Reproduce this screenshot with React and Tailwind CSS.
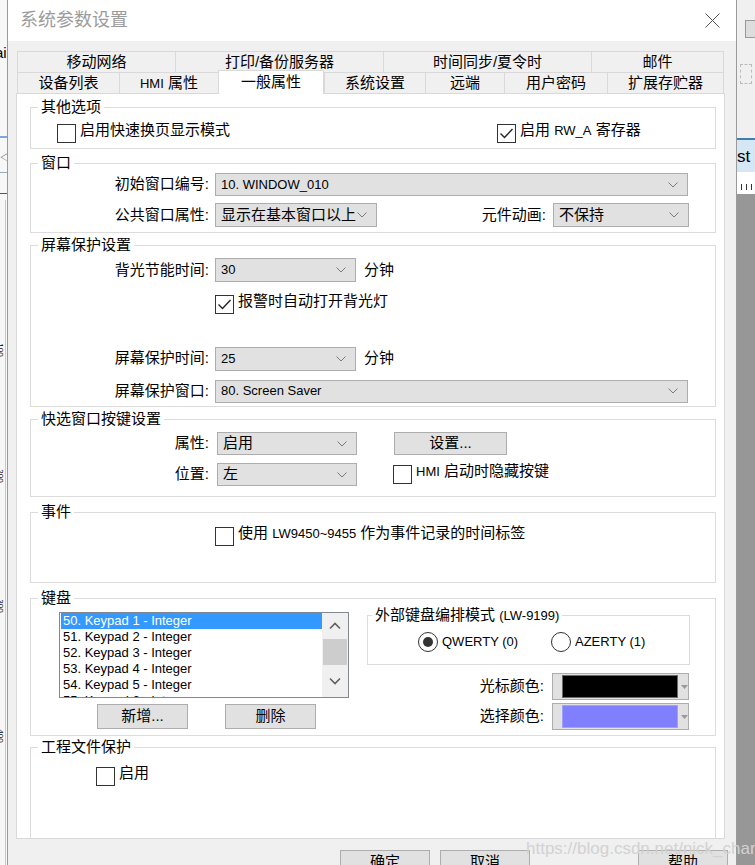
import React from 'react'

const Chevron = () => (
  <svg width="10" height="6" viewBox="0 0 10 6" className="shrink-0">
    <path d="M0.5 0.5 L5 5 L9.5 0.5" fill="none" stroke="#7a7a7a" strokeWidth="1" />
  </svg>
)

const Select = ({ value, className, latin }) => (
  <div className={`flex items-center h-[23px] bg-[#e1e1e1] border border-[#adadad] pl-[5px] pr-[9px] ${className}`}>
    <span className={`flex-1 overflow-hidden whitespace-nowrap ${latin ? 'text-[13px]' : 'text-[15px]'}`}>{value}</span>
    <Chevron />
  </div>
)

const Check = ({ checked, children, className = '' }) => (
  <div className={`flex items-center ${className}`}>
    <span className="w-[19px] h-[19px] shrink-0 border border-[#333] bg-white flex items-center justify-center">
      {checked && (
        <svg width="15" height="13" viewBox="0 0 15 13">
          <path d="M1.5 6.5 L5.5 10.5 L13.5 2" fill="none" stroke="#222" strokeWidth="1.4" />
        </svg>
      )}
    </span>
    <span className="relative -top-[3px] ml-[4px] text-[15px] whitespace-nowrap">{children}</span>
  </div>
)

const Radio = ({ checked, children }) => (
  <div className="flex items-center">
    <span className="w-[20px] h-[20px] rounded-full border border-[#333] bg-white flex items-center justify-center">
      {checked && <span className="w-[10px] h-[10px] rounded-full bg-[#333]" />}
    </span>
    <span className="ml-[4px] text-[13px]">{children}</span>
  </div>
)

const Group = ({ title, className, children }) => (
  <div className={`relative shrink-0 border border-[#dcdcdc] ${className}`}>
    <span className="absolute left-[7px] -top-[11px] bg-white px-[3px] text-[15px] leading-[20px] whitespace-nowrap">{title}</span>
    {children}
  </div>
)

const Label = ({ children, className = 'w-[178px]' }) => (
  <span className={`text-right text-[15px] whitespace-nowrap ${className}`}>{children}</span>
)

const Btn = ({ children, className }) => (
  <div className={`flex items-center justify-center bg-[#e1e1e1] border border-[#adadad] text-[15px] ${className}`}>
    <span>{children}</span>
  </div>
)

const ColorPick = ({ color, edge }) => (
  <div className="flex items-center w-[137px] h-[27px] bg-[#e1e1e1] border border-[#adadad] pl-[9px]">
    <span className={`w-[116px] h-[23px] border ${color} ${edge}`} />
    <svg width="7" height="4" viewBox="0 0 7 4" className="ml-[3px]">
      <path d="M0 0 L7 0 L3.5 4 Z" fill="#9a9a9a" />
    </svg>
  </div>
)

const tabsTop = [
  { label: '移动网络', w: 'w-[158px]' },
  { label: '打印/备份服务器', w: 'w-[208px]' },
  { label: '时间同步/夏令时', w: 'w-[208px]' },
  { label: '邮件', w: 'w-[133px]' },
]

const tabsBottom = [
  { label: '设备列表', w: 'w-[102px]' },
  { label: <span><span className="text-[13px]">HMI</span> 属性</span>, w: 'w-[99px]' },
  { label: '一般属性', w: 'w-[106px]', active: true },
  { label: '系统设置', w: 'w-[101px]' },
  { label: '远端', w: 'w-[79px]' },
  { label: '用户密码', w: 'w-[103px]' },
  { label: '扩展存贮器', w: 'w-[117px]' },
]

const keypads = [
  '50. Keypad 1 - Integer',
  '51. Keypad 2 - Integer',
  '52. Keypad 3 - Integer',
  '53. Keypad 4 - Integer',
  '54. Keypad 5 - Integer',
  '55. Keypad 6 - Integer',
]

export default function App() {
  return (
    <div className="relative flex w-[755px] h-[865px] overflow-hidden bg-white text-black font-['Liberation_Sans','Noto_Sans_CJK_SC',sans-serif]">
      {/* left strip: editor behind the dialog */}
      <div className="relative w-[7px] h-full shrink-0 bg-[#f7f7f7] overflow-hidden">
        <span className="absolute -left-[5px] top-[42px] text-[15px]">ai</span>
        <span className="absolute left-0 top-[136px] w-[7px] h-[2px] bg-[#7fa7d6]" />
        <span className="absolute left-0 top-[150px] text-[10px] text-[#444]">◁</span>
        <span className="absolute left-0 top-[172px] w-[7px] h-px bg-[#9ab]" />
        <span className="absolute left-0 top-[193px] w-[7px] h-px bg-[#555]" />
        <span className="absolute left-[5px] top-[200px] w-px h-[665px] bg-[#c8c8c8]" />
        <span className="absolute -left-[7px] top-[346px] rotate-90 text-[8px] leading-[8px]">100</span>
        <span className="absolute -left-[7px] top-[472px] rotate-90 text-[8px] leading-[8px]">200</span>
        <span className="absolute -left-[7px] top-[602px] rotate-90 text-[8px] leading-[8px]">300</span>
        <span className="absolute -left-[7px] top-[732px] rotate-90 text-[8px] leading-[8px]">400</span>
      </div>

      {/* dialog */}
      <div className="flex flex-col shrink-0 w-[730px] h-full border-x border-[#9a9a9a] bg-[#f0f0f0]">
        <div className="flex shrink-0 items-center justify-between h-[41px] bg-white pl-[12px] pr-[16px]">
          <span className="text-[18px] text-[#9b9b9b]">系统参数设置</span>
          <svg width="15" height="15" viewBox="0 0 15 15">
            <path d="M0.5 0.5 L14.5 14.5 M14.5 0.5 L0.5 14.5" stroke="#555" strokeWidth="1" />
          </svg>
        </div>

        <div className="flex shrink-0 flex-col pl-[8px] pt-[10px]">
          {/* tabs */}
          <div className="ml-[1px] w-[707px] shrink-0">
            <div className="flex h-[21px]">
              {tabsTop.map((t, i) => (
                <div
                  key={i}
                  className={`flex items-center justify-center border-t border-l border-[#d9d9d9] text-[15px] ${t.w} ${i === tabsTop.length - 1 ? 'border-r' : ''}`}
                >
                  {t.label}
                </div>
              ))}
            </div>
            <div className="flex items-end h-[21px]">
              {tabsBottom.map((t, i) =>
                t.active ? (
                  <div
                    key={i}
                    className={`relative z-10 -mb-px flex items-start justify-center h-[24px] bg-white border-x border-t border-[#d9d9d9] text-[15px] ${t.w}`}
                  >
                    {t.label}
                  </div>
                ) : (
                  <div
                    key={i}
                    className={`flex items-center justify-center h-[21px] border-t border-l border-[#d9d9d9] text-[15px] ${t.w} ${i === tabsBottom.length - 1 ? 'border-r' : ''}`}
                  >
                    {t.label}
                  </div>
                )
              )}
            </div>
          </div>

          {/* tab page */}
          <div className="flex shrink-0 flex-col w-[709px] h-[746px] border border-[#d9d9d9] bg-white pl-[13px] pr-[8px] pt-[13px]">
            <Group title="其他选项" className="h-[42px] pt-[14px] pl-[26px]">
              <div className="flex">
                <Check className="w-[440px]">启用快速换页显示模式</Check>
                <Check checked>
                  启用 <span className="text-[13px]">RW_A</span> 寄存器
                </Check>
              </div>
            </Group>

            <Group title="窗口" className="mt-[14px] h-[70px] pt-[9px]">
              <div className="flex items-center">
                <Label>初始窗口编号:</Label>
                <Select value="10. WINDOW_010" latin className="ml-[6px] w-[473px]" />
              </div>
              <div className="flex items-center mt-[7px]">
                <Label>公共窗口属性:</Label>
                <Select value="显示在基本窗口以上" className="ml-[6px] w-[162px] h-[24px]" />
                <span className="flex-1" />
                <Label className="">元件动画:</Label>
                <Select value="不保持" className="ml-[7px] mr-[26px] w-[136px] h-[24px]" />
              </div>
            </Group>

            <Group title="屏幕保护设置" className="mt-[12px] h-[162px] pt-[12px]">
              <div className="flex items-center">
                <Label>背光节能时间:</Label>
                <Select value="30" latin className="ml-[6px] w-[141px] h-[24px]" />
                <span className="ml-[8px] text-[15px]">分钟</span>
              </div>
              <Check checked className="mt-[11px] pl-[184px]">报警时自动打开背光灯</Check>
              <div className="flex items-center mt-[31px]">
                <Label>屏幕保护时间:</Label>
                <Select value="25" latin className="ml-[6px] w-[141px] h-[24px]" />
                <span className="ml-[8px] text-[15px]">分钟</span>
              </div>
              <div className="flex items-center mt-[9px]">
                <Label>屏幕保护窗口:</Label>
                <Select value="80. Screen Saver" latin className="ml-[6px] w-[473px]" />
              </div>
            </Group>

            <Group title="快选窗口按键设置" className="mt-[12px] h-[78px] pt-[12px]">
              <div className="flex items-center">
                <Label>属性:</Label>
                <Select value="启用" className="ml-[8px] w-[140px]" />
                <Btn className="ml-[37px] w-[113px] h-[23px]">设置...</Btn>
              </div>
              <div className="flex items-center mt-[8px]">
                <Label>位置:</Label>
                <Select value="左" className="ml-[8px] w-[140px]" />
                <Check className="ml-[36px]">
                  <span className="text-[13px]">HMI</span> 启动时隐藏按键
                </Check>
              </div>
            </Group>

            <Group title="事件" className="mt-[15px] h-[71px] pt-[12px] pl-[184px]">
              <Check>
                使用 <span className="text-[13px]">LW9450~9455</span> 作为事件记录的时间标签
              </Check>
            </Group>

            <Group title="键盘" className="mt-[15px] h-[138px] flex">
              <div className="flex flex-col pl-[28px] pt-[13px]">
                <div className="flex w-[290px] h-[86px] border border-[#828790] bg-white overflow-hidden">
                  <div className="w-[262px] flex flex-col">
                    {keypads.map((k, i) => (
                      <div
                        key={k}
                        className={`shrink-0 ml-px h-[16px] leading-[16px] pl-[2px] text-[13px] whitespace-nowrap ${i === 0 ? 'bg-[#3399ff] text-white' : ''}`}
                      >
                        {k}
                      </div>
                    ))}
                  </div>
                  <div className="w-[26px] flex flex-col bg-[#f0f0f0]">
                    <div className="h-[26px] flex items-center justify-center">
                      <svg width="12" height="8" viewBox="0 0 12 8">
                        <path d="M1 6.5 L6 1.5 L11 6.5" fill="none" stroke="#606060" strokeWidth="1.6" />
                      </svg>
                    </div>
                    <div className="h-[26px] mx-px bg-[#cdcdcd]" />
                    <div className="flex-1 flex items-center justify-center">
                      <svg width="12" height="8" viewBox="0 0 12 8">
                        <path d="M1 1.5 L6 6.5 L11 1.5" fill="none" stroke="#606060" strokeWidth="1.6" />
                      </svg>
                    </div>
                  </div>
                </div>
                <div className="flex mt-[6px]">
                  <Btn className="ml-[38px] w-[91px] h-[25px]">新增...</Btn>
                  <Btn className="ml-[37px] w-[91px] h-[25px]">删除</Btn>
                </div>
              </div>

              <div className="flex flex-col ml-[18px] pt-[16px] w-[323px]">
                <div className="relative h-[50px] border border-[#dcdcdc] pl-[50px] pt-[16px]">
                  <span className="absolute left-[4px] -top-[11px] bg-white px-[3px] text-[15px] leading-[20px] whitespace-nowrap">
                    外部键盘编排模式 <span className="text-[13px]">(LW-9199)</span>
                  </span>
                  <div className="flex">
                    <div className="w-[133px]">
                      <Radio checked>QWERTY (0)</Radio>
                    </div>
                    <Radio>AZERTY (1)</Radio>
                  </div>
                </div>
                <div className="flex items-center justify-end mt-[8px] pr-px">
                  <Label className="">光标颜色:</Label>
                  <span className="w-[8px]" />
                  <ColorPick color="bg-black" edge="border-[#6a6a6a]" />
                </div>
                <div className="flex items-center justify-end mt-[3px] pr-px">
                  <Label className="">选择颜色:</Label>
                  <span className="w-[8px]" />
                  <ColorPick color="bg-[#8080ff]" edge="border-[#a0a0ff]" />
                </div>
              </div>
            </Group>

            <Group title="工程文件保护" className="mt-[11px] flex-1 border-b-0 pt-[17px] pl-[65px]">
              <Check>启用</Check>
            </Group>
          </div>

          {/* dialog buttons */}
          <div className="flex shrink-0 mt-[11px] pl-[324px]">
            <Btn className="w-[90px] h-[24px]">确定</Btn>
            <Btn className="ml-[10px] w-[90px] h-[24px]">取消</Btn>
            <Btn className="ml-[108px] w-[90px] h-[24px]">帮助</Btn>
          </div>
        </div>
      </div>

      {/* right strip: editor behind the dialog */}
      <div className="flex flex-col shrink-0 w-[18px] h-full">
        <div className="relative h-[138px] shrink-0 bg-[#f0f0f0]">
          <span className="absolute left-[8px] top-[20px] w-[12px] h-[18px] border border-[#999] bg-[#ddd]" />
          <span className="absolute left-[3px] top-[64px] w-[12px] h-[20px] border border-dashed border-[#bbb]" />
        </div>
        <div className="h-[34px] shrink-0 border-t-2 border-[#3c7fb1] bg-[#d5e6f5] flex items-center overflow-hidden">
          <span className="text-[17px] leading-none whitespace-nowrap">st</span>
        </div>
        <div className="h-[22px] shrink-0 bg-white flex items-end gap-[4px] pl-[4px] pb-[4px]">
          <span className="w-px h-[6px] bg-[#333]" />
          <span className="w-px h-[6px] bg-[#333]" />
          <span className="w-px h-[6px] bg-[#333]" />
        </div>
        <div className="flex-1 bg-[#979797]" />
      </div>

      <span className="absolute left-[526px] top-[836px] text-[17px] text-[#d2d2d2] whitespace-nowrap">
        https://blog.csdn.net/nick_chan
      </span>
    </div>
  )
}
